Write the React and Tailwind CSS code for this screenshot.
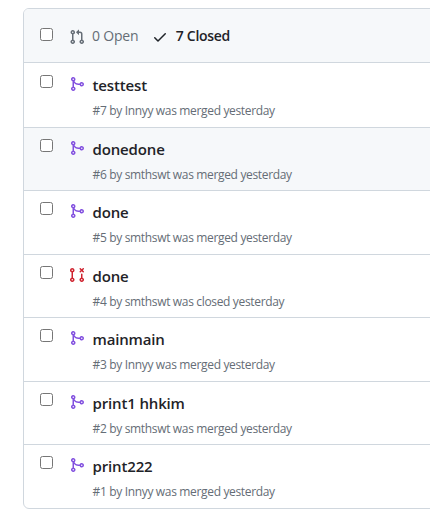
const PATHS = {
  open: "M1.5 3.25a2.25 2.25 0 1 1 3 2.122v5.256a2.251 2.251 0 1 1-1.5 0V5.372A2.25 2.25 0 0 1 1.5 3.25Zm5.677-.177L9.573.677A.25.25 0 0 1 10 .854V2.5h1A2.5 2.5 0 0 1 13.5 5v5.628a2.251 2.251 0 1 1-1.5 0V5a1 1 0 0 0-1-1h-1v1.646a.25.25 0 0 1-.427.177L7.177 3.427a.25.25 0 0 1 0-.354ZM3.75 2.5a.75.75 0 1 0 0 1.5.75.75 0 0 0 0-1.5Zm0 9.5a.75.75 0 1 0 0 1.5.75.75 0 0 0 0-1.5Zm8.25.75a.75.75 0 1 0 1.5 0 .75.75 0 0 0-1.5 0Z",
  merged: "M5.45 5.154A4.25 4.25 0 0 0 9.25 7.5h1.378a2.251 2.251 0 1 1 0 1.5H9.25A5.734 5.734 0 0 1 5 7.123v3.505a2.25 2.25 0 1 1-1.5 0V5.372a2.25 2.25 0 1 1 1.95-.218ZM4.25 13.5a.75.75 0 1 0 0-1.5.75.75 0 0 0 0 1.5Zm8.5-4.5a.75.75 0 1 0 0-1.5.75.75 0 0 0 0 1.5ZM5 3.25a.75.75 0 1 0-1.5 0 .75.75 0 0 0 1.5 0Z",
  closed: "M3.25 1A2.25 2.25 0 0 1 4 5.372v5.256a2.251 2.251 0 1 1-1.5 0V5.372A2.251 2.251 0 0 1 3.25 1Zm9.5 5.5a.75.75 0 0 1 .75.75v3.378a2.251 2.251 0 1 1-1.5 0V7.25a.75.75 0 0 1 .75-.75Zm-2.03-5.273a.75.75 0 0 1 1.06 0l.97.97.97-.97a.748.748 0 0 1 1.265.332.75.75 0 0 1-.205.729l-.97.97.97.97a.751.751 0 0 1-.018 1.042.751.751 0 0 1-1.042.018l-.97-.97-.97.97a.749.749 0 0 1-1.275-.326.749.749 0 0 1 .215-.734l.97-.97-.97-.97a.75.75 0 0 1 0-1.06ZM2.5 3.25a.75.75 0 1 0 1.5 0 .75.75 0 0 0-1.5 0ZM3.25 12a.75.75 0 1 0 0 1.5.75.75 0 0 0 0-1.5Zm9.5 0a.75.75 0 1 0 0 1.5.75.75 0 0 0 0-1.5Z",
  check: "M13.78 4.22a.75.75 0 0 1 0 1.06l-7.25 7.25a.75.75 0 0 1-1.06 0L2.22 9.28a.751.751 0 0 1 .018-1.042.751.751 0 0 1 1.042-.018L6 10.94l6.72-6.72a.75.75 0 0 1 1.06 0Z",
};

function Icon({ name, className }) {
  return (
    <svg viewBox="0 0 16 16" className={`size-4 shrink-0 fill-current ${className}`} aria-hidden="true">
      <path d={PATHS[name]} />
    </svg>
  );
}

function Checkbox({ label, className }) {
  return (
    <input
      type="checkbox"
      aria-label={label}
      className={`size-[13px] shrink-0 appearance-none rounded-[2.5px] border border-[#767676] bg-white ${className}`}
    />
  );
}

const PULLS = [
  { id: 7, title: "testtest", author: "Innyy", state: "merged" },
  { id: 6, title: "donedone", author: "smthswt", state: "merged", active: true },
  { id: 5, title: "done", author: "smthswt", state: "merged" },
  { id: 4, title: "done", author: "smthswt", state: "closed" },
  { id: 3, title: "mainmain", author: "Innyy", state: "merged" },
  { id: 2, title: "print1 hhkim", author: "smthswt", state: "merged" },
  { id: 1, title: "print222", author: "Innyy", state: "merged" },
];

function PullRow({ pull }) {
  return (
    <li
      className={`flex h-[63.5px] items-start border-t border-[#d0d7de] pl-4 first:border-transparent ${pull.active ? "bg-[#f6f8fa]" : ""}`}
    >
      <Checkbox label={`Select #${pull.id}`} className="mt-[11px]" />
      <Icon name={pull.state} className={`mt-3 ml-4 ${pull.state === "closed" ? "text-[#cf222e]" : "text-[#8250df]"}`} />
      <div className="ml-[7.5px] pt-[9px]">
        <h2 className="text-[15px] leading-6 font-[580] tracking-[-0.15px] text-[#1f2328]">{pull.title}</h2>
        <p className="mt-[5px] text-xs leading-[18px] tracking-[-0.34px] text-[#656d76]">
          #{pull.id} by {pull.author} was {pull.state} yesterday
        </p>
      </div>
    </li>
  );
}

export default function App() {
  return (
    <main className="h-[522px] w-[430px] overflow-hidden bg-white pt-2 pl-[23px] font-['Open_Sans','Noto_Sans',sans-serif]">
      <section className="w-[440px] overflow-hidden rounded-md border border-[#d0d7de]">
        <header className="flex h-[54px] items-center border-b border-[#d0d7de] bg-[#f6f8fa] pl-4 text-sm">
          <Checkbox label="Select all" className="-mt-0.5" />
          <div className="ml-4 flex items-center text-[#656d76]">
            <Icon name="open" className="mt-0.5" />
            <span className="ml-[7px] tracking-[-0.2px]">0 Open</span>
          </div>
          <div className="ml-3.5 flex items-center font-[580] text-[#1f2328]">
            <Icon name="check" className="mt-0.5" />
            <span className="ml-[7.5px] tracking-[-0.32px]">7 Closed</span>
          </div>
        </header>
        <ul>
          {PULLS.map((pull) => (
            <PullRow key={pull.id} pull={pull} />
          ))}
        </ul>
      </section>
    </main>
  );
}
